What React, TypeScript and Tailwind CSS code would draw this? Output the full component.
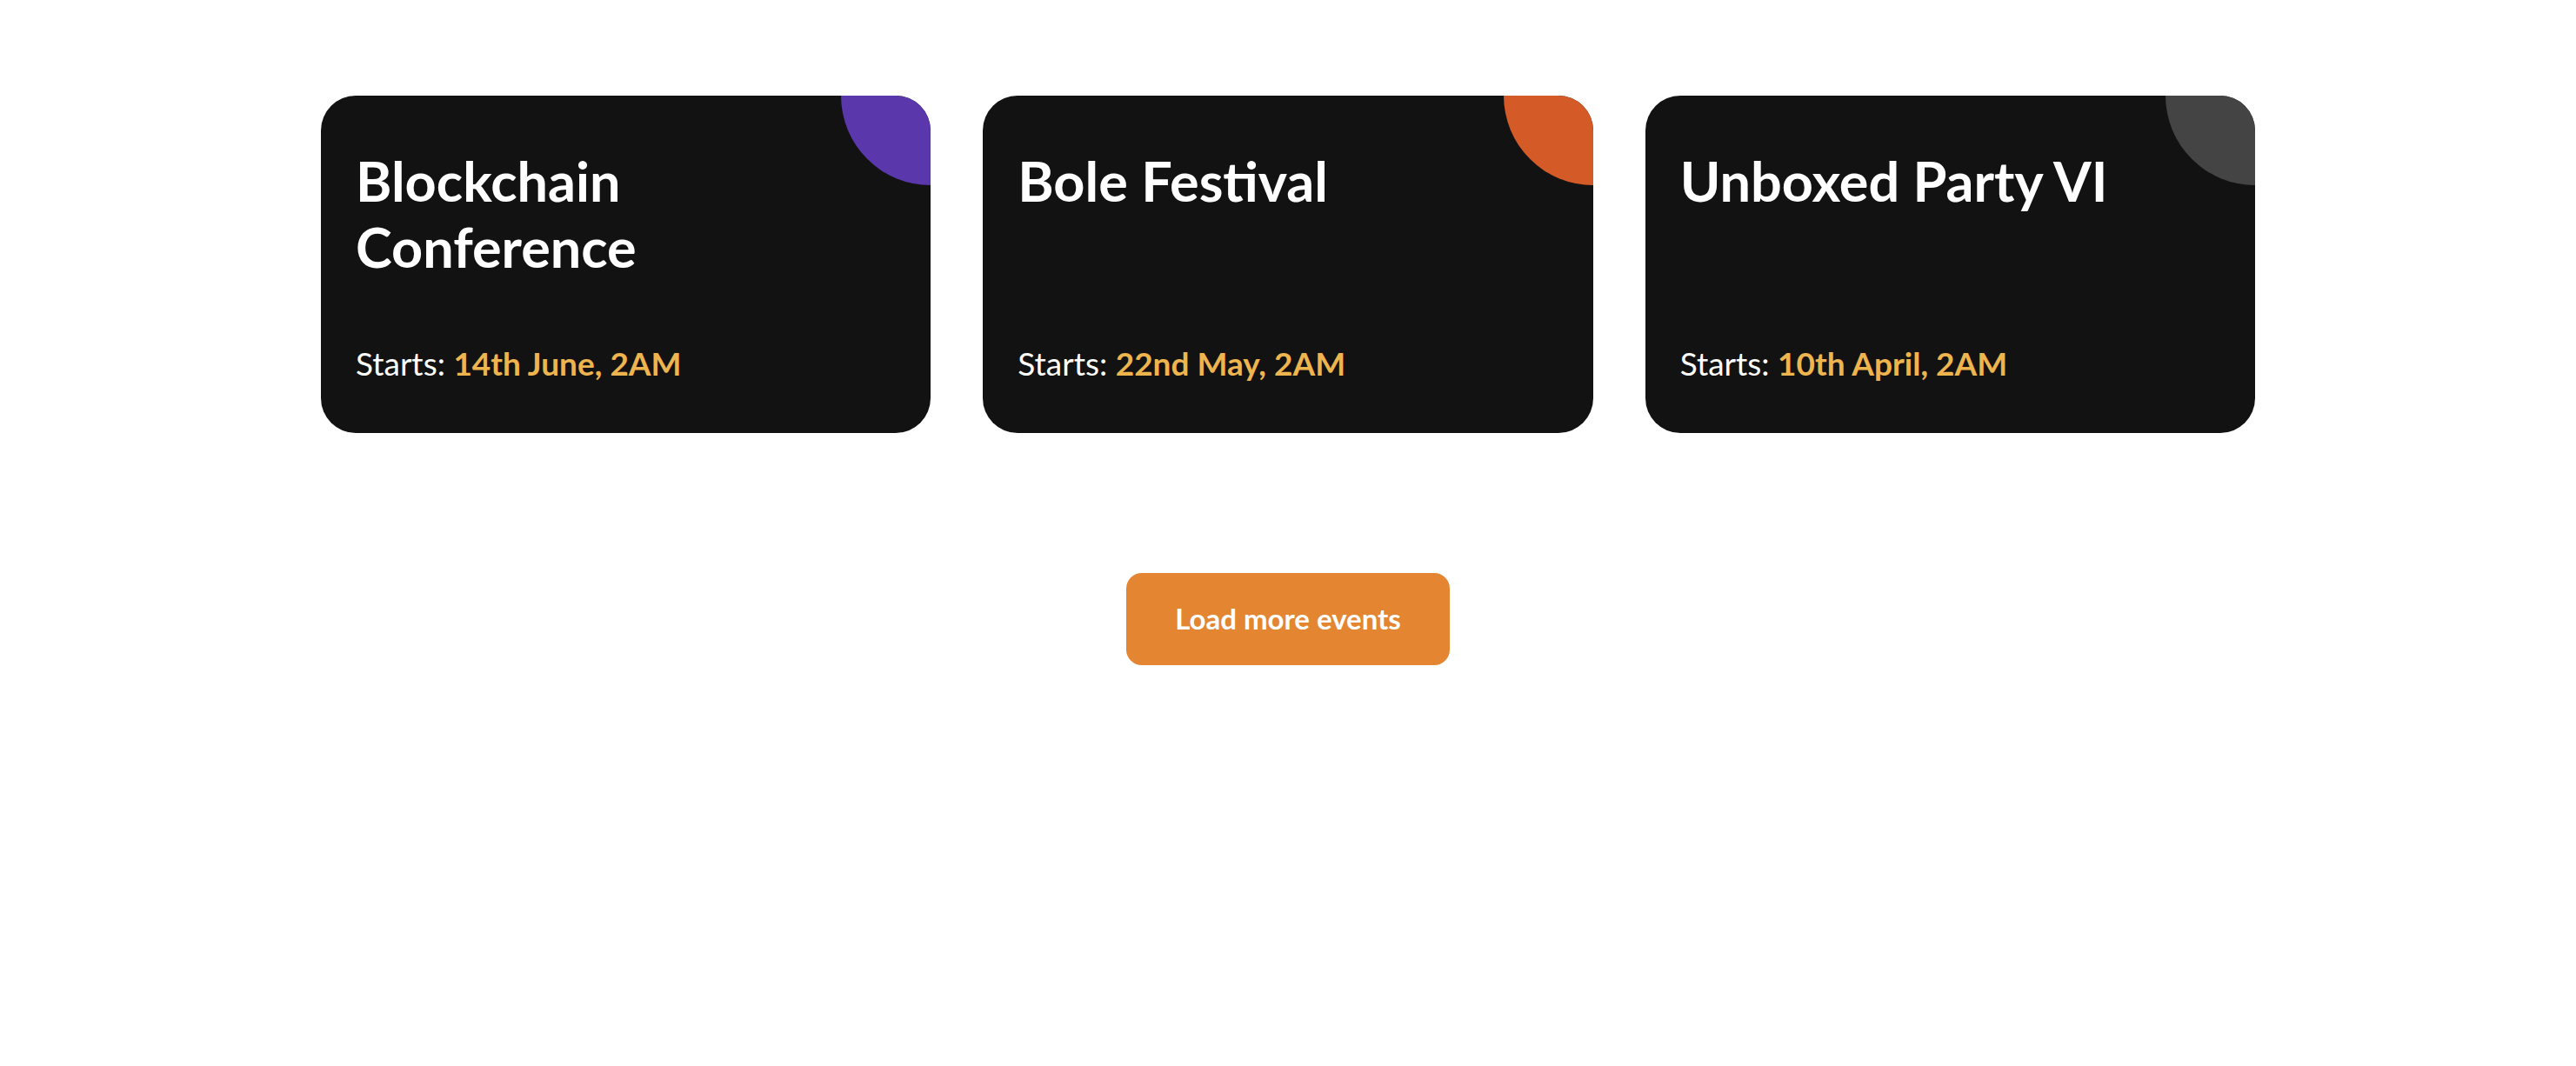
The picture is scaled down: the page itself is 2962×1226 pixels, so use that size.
const events = [
  { id: 1, title: "Blockchain Conference", date: "14th June, 2AM", blob: "bg-[#5a37aa]" },
  { id: 2, title: "Bole Festival", date: "22nd May, 2AM", blob: "bg-[#d45b28]" },
  { id: 3, title: "Unboxed Party VI", date: "10th April, 2AM", blob: "bg-[#444444]" },
];

const App = () => {
  return (
    <div className="min-h-screen bg-white font-['Lato',sans-serif]">
      <section className="pt-[110px]">
        <div className="mx-auto grid w-[2224px] grid-cols-3 gap-[60px]">
          {events.map((event) => (
            <div
              key={event.id}
              className="relative flex h-[388px] flex-col overflow-hidden rounded-[40px] bg-[#121212] px-[40px] pt-[60px] pb-[53px]"
            >
              {/* corner blob */}
              <div className={`absolute -top-[103px] -right-[103px] h-[206px] w-[206px] rounded-full ${event.blob}`}></div>

              <h3 className="relative text-[63px] font-bold leading-[76px] text-white">
                {event.title}
              </h3>
              <p className="relative mt-auto text-[37px] leading-[54px] text-white">
                Starts: <span className="font-bold text-[#eeb44e]">{event.date}</span>
              </p>
            </div>
          ))}
        </div>

        <div className="mt-[161px] flex justify-center">
          <button className="h-[106px] w-[372px] rounded-[18px] bg-[#e38531] text-[33px] font-bold text-white">
            Load more events
          </button>
        </div>
      </section>
    </div>
  );
};

export default App;
